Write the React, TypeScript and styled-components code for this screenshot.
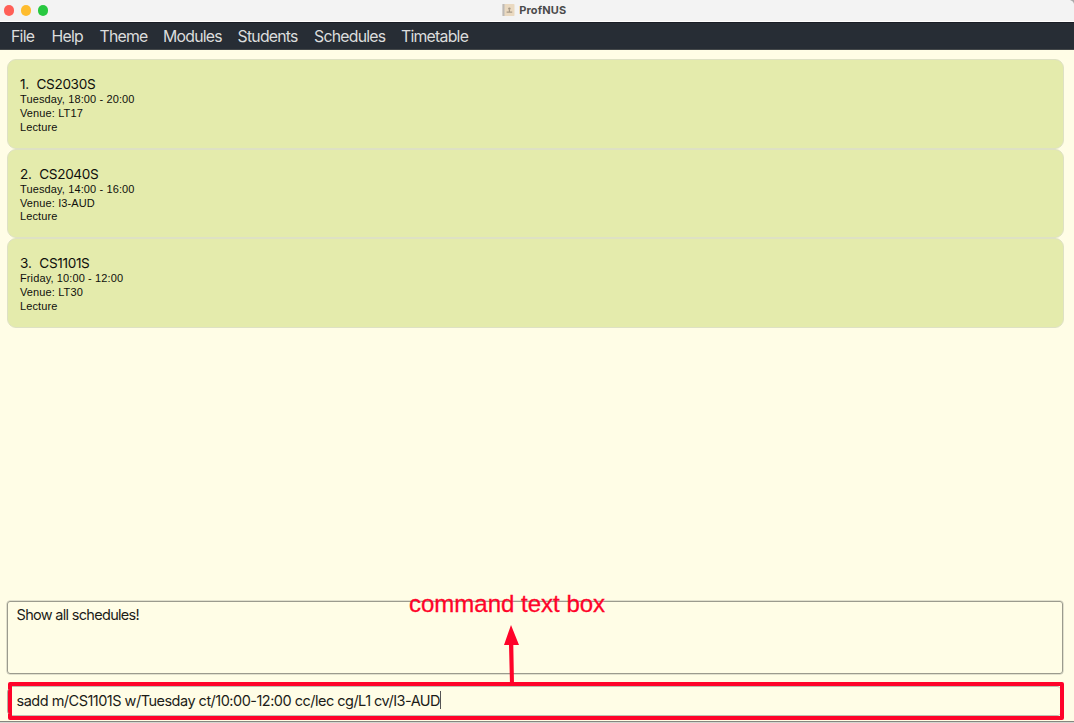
import React from "react";
import styled, { createGlobalStyle } from "styled-components";

const GlobalStyle = createGlobalStyle`
  * { box-sizing: border-box; }
  body { margin: 0; overflow: hidden; background: #fffde6; }
`;

const Window = styled.div`
  display: flex;
  flex-direction: column;
  width: 1074px;
  height: 723px;
  background: #fffde6;
  font-family: Inter, "Liberation Sans", sans-serif;
  color: #1c1c18;
  border-bottom: 1px solid #d6d6d0;
  white-space: pre;
`;

const TitleBar = styled.header`
  position: relative;
  display: flex;
  align-items: center;
  justify-content: center;
  flex: none;
  height: 22px;
  background: #f3f3f3;
  border-bottom: 1px solid #fff;
`;

const Lights = styled.div`
  position: absolute;
  left: 3.6px;
  top: 5px;
  display: flex;
  gap: 6.4px;
`;

const Light = styled.i<{ $color: string }>`
  width: 10.6px;
  height: 10.6px;
  border-radius: 50%;
  background: ${(p) => p.$color};
`;

const Corner = styled.svg`
  position: absolute;
  right: 0;
  top: 0;
`;

const AppName = styled.span`
  display: flex;
  align-items: center;
  gap: 4px;
  height: 20px;
  margin: 0 5.6px 2px 0;
  font-size: 11px;
  font-weight: 700;
  letter-spacing: 0.15px;
  color: #4b4b4b;
`;

const MenuBar = styled.nav`
  display: flex;
  align-items: center;
  flex: none;
  height: 28px;
  padding: 1px 4px 0 3px;
  background: #272d35;
  border-top: 1px solid #1a1d25;
  border-bottom: 1px solid #44484a;
`;

const MenuItem = styled.span<{ $width: number }>`
  flex: none;
  width: ${(p) => p.$width}px;
  padding-left: 8px;
  font-size: 15.8px;
  line-height: 26px;
  letter-spacing: -0.75px;
  color: #dcdddd;
`;

const List = styled.main`
  flex: 1;
  padding: 9px 10px 0 7px;
`;

const Card = styled.article`
  height: 89.7px;
  padding: 16.1px 12px 0;
  border: 1px solid #dee1c4;
  border-radius: 9px;
  background: #e4ebac;
`;

const CardTitle = styled.h2`
  margin: 0;
  font-size: 13.6px;
  font-weight: 400;
  line-height: 17px;
  letter-spacing: -0.35px;
  word-spacing: 0.4px;
  font-kerning: none;
  color: #10100c;
`;

const CardLine = styled.p`
  margin: 0;
  font: 11px/13.8px "Liberation Sans", Arial, sans-serif;
  letter-spacing: 0.12px;
  color: #10100c;
`;

const ResultBox = styled.section`
  position: relative;
  flex: none;
  height: 73px;
  margin: 0 11px 8px 7px;
  padding: 3px 8.6px;
  border: 1px solid #9b9b8e;
  border-radius: 3px;
  box-shadow: 0 0 0 0.5px #c4c4b4;
  font-size: 14.5px;
  line-height: 20px;
  letter-spacing: -0.7px;
`;

const CommandFrame = styled.section`
  position: relative;
  flex: none;
  height: 38px;
  margin: 0 10px 1px 8px;
  border: 4px solid #ff0329;
  border-radius: 2px;
  background: #fffde6;
`;

const CommandInput = styled.div`
  display: flex;
  align-items: center;
  height: 30px;
  padding: 0 0 2px 4.6px;
  border-top: 1px solid #bebeb1;
  border-bottom: 1px solid #bebeb1;
  border-radius: 0 3px 3px 0;
  font-size: 14.5px;
  letter-spacing: -0.51px;
`;

const Caret = styled.i`
  width: 1px;
  height: 18px;
  background: #555;
`;

const FieldEdge = styled.i`
  position: absolute;
  left: -5px;
  top: 3px;
  width: 3px;
  height: 25px;
  border-left: 1px solid #b2b2a4;
  border-radius: 3px 0 0 3px;
`;

const BottomEdge = styled.div`
  flex: none;
  height: 1px;
  background: #85857f;
`;

const Note = styled.div`
  position: absolute;
  left: 401px;
  top: -12px;
  font: 24px/28px "Liberation Sans", Arial, sans-serif;
  letter-spacing: 0;
  color: #ff0329;
  -webkit-text-stroke: 0.3px #ff0329;
`;

const Arrow = styled.svg`
  position: absolute;
  left: 495px;
  top: 22px;
  z-index: 1;
`;

const menus: [string, number][] = [
  ["File", 40.5], ["Help", 48], ["Theme", 63.5], ["Modules", 74.5],
  ["Students", 76.5], ["Schedules", 87], ["Timetable", 84],
];

const schedules = [
  { code: "CS2030S", time: "Tuesday, 18:00 - 20:00", venue: "LT17", kind: "Lecture" },
  { code: "CS2040S", time: "Tuesday, 14:00 - 16:00", venue: "I3-AUD", kind: "Lecture" },
  { code: "CS1101S", time: "Friday, 10:00 - 12:00", venue: "LT30", kind: "Lecture" },
];

const BookIcon = () => (
  <svg width="13" height="12" viewBox="0 0 13 12">
    <rect x="0.5" width="12" height="12" rx="0.8" fill="#ead9c0" />
    <path d="M.5 0h2v12h-2z" fill="#bdbab8" />
    <circle cx="7.4" cy="4.6" r="1.2" fill="#a89a86" />
    <path d="M4.6 8.8V7.6h2.2V5.6h1.2v2h2.2v1.2z" fill="#a89a86" />
  </svg>
);

export default function App() {
  return (
    <Window>
      <GlobalStyle />
      <TitleBar>
        <Lights>
          <Light $color="#ff5f57" />
          <Light $color="#febc2e" />
          <Light $color="#28c840" />
        </Lights>
        <AppName><BookIcon />ProfNUS</AppName>
        <Corner width="4" height="4"><path d="M0 0h4v4Q3.5 1 0 0z" fill="#aaa" /></Corner>
      </TitleBar>
      <MenuBar>
        {menus.map(([label, width]) => <MenuItem key={label} $width={width}>{label}</MenuItem>)}
      </MenuBar>
      <List>
        {schedules.map((s, i) => (
          <Card key={s.code}>
            <CardTitle>{`${i + 1}.  ${s.code}`}</CardTitle>
            <CardLine>{s.time}</CardLine>
            <CardLine>Venue: {s.venue}</CardLine>
            <CardLine>{s.kind}</CardLine>
          </Card>
        ))}
      </List>
      <ResultBox>
        Show all schedules!
        <Note>command text box</Note>
        <Arrow width="18" height="62" viewBox="0 0 18 62">
          <path d="M8 1L16 21H10.3L11 61H7L6 21H1z" fill="#ff0329" />
        </Arrow>
      </ResultBox>
      <CommandFrame>
        <FieldEdge />
        <CommandInput>sadd m/CS1101S w/Tuesday ct/10:00-12:00 cc/lec cg/L1 cv/I3-AUD<Caret /></CommandInput>
      </CommandFrame>
      <BottomEdge />
    </Window>
  );
}
